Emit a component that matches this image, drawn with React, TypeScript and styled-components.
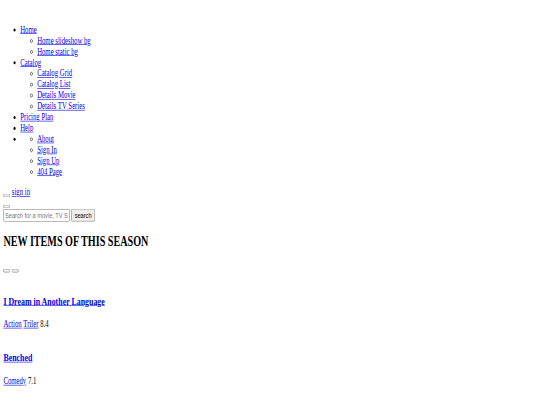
import styled, { createGlobalStyle } from 'styled-components'

const GlobalStyle = createGlobalStyle`
  html, body {
    margin: 0;
    background: #fff;
    overflow: hidden;
  }
`

// the reference is a wide unstyled page squeezed into the small window,
// so the whole page is laid out at full width and scaled down
const Page = styled.div`
  width: 1264px;
  padding: 8px;
  transform: scale(0.421875, 0.607);
  transform-origin: 0 0;
  font-family: "Liberation Serif", "Times New Roman", serif;
  font-size: 16px;
  color: #000;

  a {
    color: #0000ee;
    text-decoration: underline;
  }
`

const Logo = styled.a`
  display: block;
  height: 16px;
`

const Nav = styled.ul`
  margin: 16px 0;
  padding-left: 40px;
  list-style: disc;
`

const SubNav = styled.ul`
  margin: 0;
  padding-left: 40px;
  list-style: circle;
`

const Auth = styled.div`
  display: block;
`

const EmptyButton = styled.button`
  font-family: "Liberation Sans", Arial, sans-serif;
  font-size: 13.333px;
`

const SearchForm = styled.form`
  display: block;
`

const SearchInput = styled.input`
  box-sizing: border-box;
  width: 157px;
  font-family: "Liberation Sans", Arial, sans-serif;
  font-size: 13.333px;
`

const SearchButton = styled.button`
  font-family: "Liberation Sans", Arial, sans-serif;
  font-size: 13.333px;
`

const Title = styled.h1`
  font-size: 1.5em;
  font-weight: bold;
  margin: 0.83em 0;
`

const Card = styled.div`
  display: block;
`

const Cover = styled.div`
  height: 16px;
`

const CardTitle = styled.h3`
  font-size: 1.17em;
  margin: 1em 0;
`

const Meta = styled.div`
  display: block;
`

type Movie = { title: string; genres: string[]; rate: string }

const movies: Movie[] = [
  { title: 'I Dream in Another Language', genres: ['Action', 'Triler'], rate: '8.4' },
  { title: 'Benched', genres: ['Comedy'], rate: '7.1' },
]

export default function App() {
  return (
    <Page>
      <GlobalStyle />
      <header>
        <Logo href="#" />
        <Nav>
          <li>
            <a href="#">Home</a>
            <SubNav>
              <li><a href="#">Home slideshow bg</a></li>
              <li><a href="#">Home static bg</a></li>
            </SubNav>
          </li>
          <li>
            <a href="#">Catalog</a>
            <SubNav>
              <li><a href="#">Catalog Grid</a></li>
              <li><a href="#">Catalog List</a></li>
              <li><a href="#">Details Movie</a></li>
              <li><a href="#">Details TV Series</a></li>
            </SubNav>
          </li>
          <li><a href="#">Pricing Plan</a></li>
          <li><a href="#">Help</a></li>
          <li>
            <SubNav>
              <li><a href="#">About</a></li>
              <li><a href="#">Sign In</a></li>
              <li><a href="#">Sign Up</a></li>
              <li><a href="#">404 Page</a></li>
            </SubNav>
          </li>
        </Nav>
        <Auth>
          <EmptyButton type="button" /> <a href="#">sign in</a>
        </Auth>
        <EmptyButton type="button" />
        <SearchForm>
          <SearchInput placeholder="Search for a movie, TV Series and so on" />{' '}
          <SearchButton type="button">search</SearchButton>
        </SearchForm>
      </header>
      <section>
        <Title>NEW ITEMS OF THIS SEASON</Title>
        <div>
          <EmptyButton type="button" /> <EmptyButton type="button" />
        </div>
        {movies.map(m => (
          <Card key={m.title}>
            <Cover />
            <CardTitle><a href="#">{m.title}</a></CardTitle>
            <Meta>
              {m.genres.map(g => (
                <span key={g}><a href="#">{g}</a> </span>
              ))}
              <span>{m.rate}</span>
            </Meta>
          </Card>
        ))}
      </section>
    </Page>
  )
}
